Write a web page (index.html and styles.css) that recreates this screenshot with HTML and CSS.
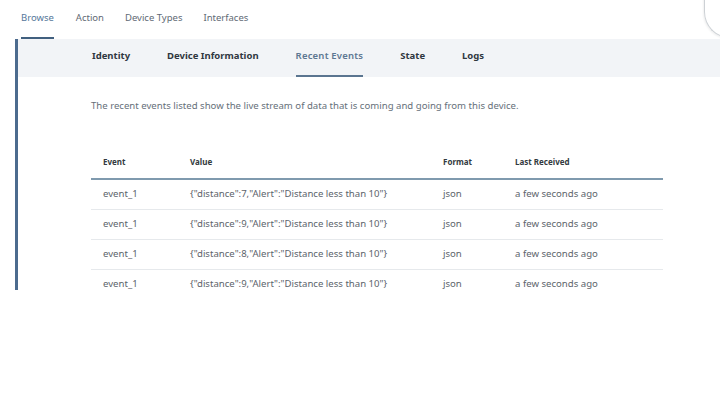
FILE: index.html
```html
<!DOCTYPE html>
<html>
<head>
<meta charset="utf-8">
<link rel="stylesheet" href="styles.css">
</head>
<body>
<nav class="topnav">
  <a class="nav-item active">Browse</a>
  <a class="nav-item">Action</a>
  <a class="nav-item">Device Types</a>
  <a class="nav-item">Interfaces</a>
</nav>
<div class="corner"></div>
<main class="panel">
  <div class="subtabs">
    <span class="tab">Identity</span>
    <span class="tab">Device Information</span>
    <span class="tab active">Recent Events</span>
    <span class="tab">State</span>
    <span class="tab">Logs</span>
  </div>
  <div class="content">
    <p class="desc">The recent events listed show the live stream of data that is coming and going from this device.</p>
    <table class="events">
      <thead>
        <tr><th class="c1">Event</th><th class="c2">Value</th><th class="c3">Format</th><th class="c4">Last Received</th></tr>
      </thead>
      <tbody>
        <tr><td>event_1</td><td>{"distance":7,"Alert":"Distance less than 10"}</td><td>json</td><td>a few seconds ago</td></tr>
        <tr><td>event_1</td><td>{"distance":9,"Alert":"Distance less than 10"}</td><td>json</td><td>a few seconds ago</td></tr>
        <tr><td>event_1</td><td>{"distance":8,"Alert":"Distance less than 10"}</td><td>json</td><td>a few seconds ago</td></tr>
        <tr><td>event_1</td><td>{"distance":9,"Alert":"Distance less than 10"}</td><td>json</td><td>a few seconds ago</td></tr>
      </tbody>
    </table>
  </div>
</main>
</body>
</html>
```
FILE: styles.css
```css
* { box-sizing: border-box; }
html, body { margin: 0; padding: 0; background: #fff; }
body {
  font-family: "Noto Sans", "Open Sans", sans-serif;
  width: 720px;
  height: 403px;
  overflow: hidden;
  position: relative;
}
.topnav {
  display: flex;
  height: 39px;
  padding-left: 21px;
}
.nav-item {
  font-size: 9.5px;
  color: #5f6a75;
  line-height: 35px;
  height: 39px;
  margin-right: 21px;
  border-bottom: 2px solid transparent;
}
.nav-item.active {
  color: #55779a;
  border-bottom-color: #41607f;
  margin-right: 22px;
}
.corner {
  position: absolute;
  right: -22px;
  top: -20px;
  width: 38px;
  height: 58px;
  border-left: 1px solid #cdd1d5;
  border-bottom: 1px solid #cdd1d5;
  border-bottom-left-radius: 26px;
  box-shadow: -1px 1px 2px rgba(0,0,0,0.06);
}
.panel {
  margin-left: 15px;
  border-left: 3px solid #4c6b8e;
  height: 251px;
  overflow: hidden;
}
.subtabs {
  display: flex;
  height: 38px;
  background: #f2f4f7;
  padding-left: 74px;
  gap: 37px;
}
.tab {
  display: flex;
  align-items: center;
  padding-bottom: 4px;
  font-size: 9.5px;
  font-weight: 700;
  color: #2f3740;
  border-bottom: 2px solid transparent;
}
.tab.active {
  color: #5d7792;
  font-weight: 600;
  letter-spacing: 0.2px;
  border-bottom-color: #5b7590;
}
.content {
  padding-left: 73px;
  padding-top: 22px;
}
.desc {
  margin: 0;
  font-size: 9.6px;
  line-height: 14px;
  color: #66707a;
}
.events {
  margin-top: 32px;
  width: 572px;
  border-collapse: collapse;
  table-layout: fixed;
}
.events th {
  font-size: 8px;
  font-weight: 700;
  color: #333a40;
  text-align: left;
  height: 34px;
  padding: 0 0 0 12px;
  border-bottom: 2px solid #7f9aae;
}
.events .c1 { width: 87px; }
.events .c2 { width: 253px; }
.events .c3 { width: 72px; }
.events .c4 { width: 160px; }
.events td {
  font-size: 9.6px;
  color: #5d646b;
  height: 30px;
  padding: 0 0 1px 12px;
  border-bottom: 1px solid #e6e9ec;
  white-space: nowrap;
}
```
